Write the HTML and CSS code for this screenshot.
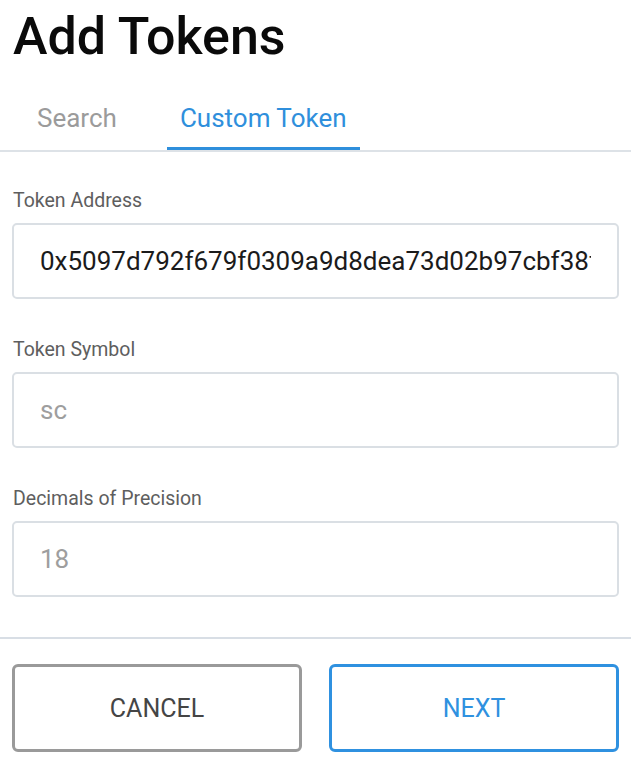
FILE: index.html
```html
<!DOCTYPE html>
<html lang="en">
<head>
<meta charset="utf-8">
<title>Add Tokens</title>
<link rel="stylesheet" href="styles.css">
</head>
<body>
<div class="page">
  <h1 class="title">Add Tokens</h1>
  <div class="tabs">
    <div class="tab">Search</div>
    <div class="tab tab-active">Custom Token</div>
  </div>
  <form class="form">
    <label class="field">
      <span class="label">Token Address</span>
      <input class="input" type="text" value="0x5097d792f679f0309a9d8dea73d02b97cbf38f4b">
    </label>
    <label class="field">
      <span class="label">Token Symbol</span>
      <input class="input" type="text" placeholder="sc">
    </label>
    <label class="field">
      <span class="label">Decimals of Precision</span>
      <input class="input" type="text" placeholder="18">
    </label>
  </form>
  <div class="footer">
    <button class="btn btn-cancel" type="button">Cancel</button>
    <button class="btn btn-next" type="button">Next</button>
  </div>
</div>
</body>
</html>
```
FILE: styles.css
```css
html, body {
  margin: 0;
  padding: 0;
  background: #ffffff;
}
body {
  font-family: Roboto, "Liberation Sans", sans-serif;
  color: #000;
}
.page {
  width: 631px;
}
.title {
  margin: 0;
  padding: 7px 0 0 13px;
  height: 59px;
  font-size: 52px;
  line-height: 60px;
  font-weight: 500;
  color: #0a0a0a;
}
.tabs {
  display: flex;
  margin-top: 37px;
  padding-left: 24px;
  border-bottom: 2px solid #dde2e7;
}
.tab {
  padding: 0 13px 14px;
  font-size: 26px;
  line-height: 30px;
  color: #9b9b9b;
  border-bottom: 3px solid transparent;
}
.tab-active {
  margin-left: 37px;
  color: #2f8fdc;
  border-bottom-color: #2f8fdc;
}
.form {
  display: flex;
  flex-direction: column;
  gap: 40px;
  padding: 38px 12px 40px;
  border-bottom: 2px solid #d8dee5;
}
.field {
  display: flex;
  flex-direction: column;
  gap: 11px;
}
.label {
  font-size: 19.5px;
  line-height: 22px;
  color: #5e5e5e;
  padding-left: 1px;
}
.input {
  box-sizing: border-box;
  width: 100%;
  height: 76px;
  margin: 0;
  padding: 0 26px;
  border: 2px solid #dadfe4;
  border-radius: 5px;
  font-family: Roboto, "Liberation Sans", sans-serif;
  font-size: 26px;
  color: #1b1b1b;
  background: #fff;
  outline: none;
}
.input::placeholder {
  color: #9e9e9e;
  opacity: 1;
}
.footer {
  display: flex;
  gap: 27px;
  padding: 25px 12px 0;
}
.btn {
  flex: 1;
  height: 88px;
  box-sizing: border-box;
  background: #fff;
  border-radius: 6px;
  font-family: Roboto, "Liberation Sans", sans-serif;
  font-size: 25px;
  text-transform: uppercase;
  cursor: pointer;
  padding: 0;
}
.btn-cancel {
  border: 3px solid #9a9a9a;
  color: #454545;
}
.btn-next {
  border: 3px solid #2f91e0;
  color: #2f91e0;
}
```
